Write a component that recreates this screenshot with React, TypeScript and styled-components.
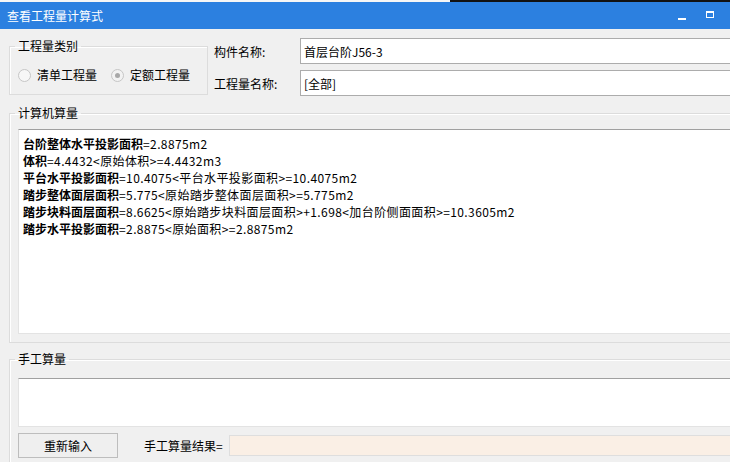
import styled, { createGlobalStyle } from 'styled-components'

const GlobalStyle = createGlobalStyle`
  html, body {
    margin: 0;
    padding: 0;
    overflow: hidden;
    background: #f0f0f0;
  }
  body {
    font-family: 'Microsoft YaHei', 'Noto Sans CJK SC', 'Noto Sans', sans-serif;
    font-size: 12px;
    color: #000;
  }
`

type Line = { label: string; value: string }

const calcLines: Line[] = [
  { label: '台阶整体水平投影面积', value: '=2.8875m2' },
  { label: '体积', value: '=4.4432<原始体积>=4.4432m3' },
  { label: '平台水平投影面积', value: '=10.4075<平台水平投影面积>=10.4075m2' },
  { label: '踏步整体面层面积', value: '=5.775<原始踏步整体面层面积>=5.775m2' },
  {
    label: '踏步块料面层面积',
    value: '=8.6625<原始踏步块料面层面积>+1.698<加台阶侧面面积>=10.3605m2',
  },
  { label: '踏步水平投影面积', value: '=2.8875<原始面积>=2.8875m2' },
]

export default function App() {
  return (
    <StyledWindow>
      <GlobalStyle />
      <TopStrip>
        <div className='left' />
        <div className='right' />
      </TopStrip>
      <TitleBar>
        <span>查看工程量计算式</span>
        <WindowControls>
          <MinButton />
          <MaxButton />
        </WindowControls>
      </TitleBar>
      <Body>
        <HeaderRow>
          <TypeGroup>
            <Legend>工程量类别</Legend>
            <RadioRow>
              <RadioItem>
                <Radio />
                清单工程量
              </RadioItem>
              <RadioItem>
                <Radio $checked />
                定额工程量
              </RadioItem>
            </RadioRow>
          </TypeGroup>
          <FieldGrid>
            <FieldLabel>构件名称:</FieldLabel>
            <TextBox>首层台阶J56-3</TextBox>
            <FieldLabel>工程量名称:</FieldLabel>
            <TextBox>[全部]</TextBox>
          </FieldGrid>
        </HeaderRow>

        <CalcGroup>
          <Legend>计算机算量</Legend>
          <CalcArea>
            {calcLines.map((line) => (
              <CalcLine key={line.label}>
                <b>{line.label}</b>
                <span>{line.value}</span>
              </CalcLine>
            ))}
          </CalcArea>
        </CalcGroup>

        <ManualGroup>
          <Legend>手工算量</Legend>
          <ManualArea />
          <ActionRow>
            <ResetButton>重新输入</ResetButton>
            <ResultLabel>手工算量结果=</ResultLabel>
            <ResultBox />
          </ActionRow>
        </ManualGroup>
      </Body>
    </StyledWindow>
  )
}

const StyledWindow = styled.div`
  width: 730px;
  height: 462px;
  overflow: hidden;
  background: #f0f0f0;
`

const TopStrip = styled.div`
  display: flex;
  height: 2px;

  .left {
    width: 450px;
    background: #f6f6f6;
  }
  .right {
    flex: 1;
    background: #121212;
  }
`

const TitleBar = styled.div`
  height: 27px;
  display: flex;
  align-items: center;
  justify-content: space-between;
  padding-left: 7px;
  background: #2c80e0;
  color: #fff;
  font-size: 12px;
`

const WindowControls = styled.div`
  display: flex;
  align-items: center;
  gap: 20px;
  padding-right: 16px;
`

const MinButton = styled.span`
  display: block;
  width: 8px;
  height: 2px;
  margin-top: 7px;
  background: #fff;
`

const MaxButton = styled.span`
  display: block;
  box-sizing: border-box;
  width: 8px;
  height: 7px;
  margin-top: -2px;
  border: 1px solid #fff;
  border-top-width: 2px;
`

const Body = styled.div`
  width: 760px;
  padding: 9px 0 0 9px;
  display: flex;
  flex-direction: column;
`

const HeaderRow = styled.div`
  display: flex;
  align-items: flex-start;
`

const Group = styled.fieldset`
  margin: 0;
  padding: 0 0 0 8px;
  border: 1px solid #dcdcdc;
  box-shadow: inset 1px 1px 0 #fff;
  min-width: 0;
`

const Legend = styled.legend`
  margin-left: -3px;
  padding: 0 3px;
  font-size: 12px;
  line-height: 14px;
`

const TypeGroup = styled(Group)`
  box-sizing: border-box;
  width: 199px;
  height: 56px;
  margin-top: 1px;
`

const RadioRow = styled.div`
  display: flex;
  gap: 14px;
  margin-top: 15px;
`

const RadioItem = styled.label`
  display: flex;
  align-items: center;
  gap: 6px;
  line-height: 14px;
`

const Radio = styled.span<{ $checked?: boolean }>`
  box-sizing: border-box;
  width: 13px;
  height: 13px;
  border-radius: 50%;
  border: 1px solid #c6c6c6;
  background: ${({ $checked }) => ($checked ? '#f2f2f2' : '#f7f7f7')};
  display: flex;
  align-items: center;
  justify-content: center;

  &::after {
    content: '';
    width: 5px;
    height: 5px;
    border-radius: 50%;
    background: ${({ $checked }) => ($checked ? '#a8a8a8' : 'transparent')};
  }
`

const FieldGrid = styled.div`
  flex: 1;
  display: grid;
  grid-template-columns: 86px 1fr;
  grid-auto-rows: 26px;
  row-gap: 6px;
  margin-left: 6px;
`

const FieldLabel = styled.div`
  display: flex;
  align-items: center;
`

const TextBox = styled.div`
  box-sizing: border-box;
  border: 1px solid #acacac;
  background: #fff;
  display: flex;
  align-items: center;
  padding-left: 3px;
`

const CalcGroup = styled(Group)`
  margin-top: 10px;
  padding-bottom: 8px;
`

const TextArea = styled.div`
  box-sizing: border-box;
  background: #fff;
  border: 1px solid #e3e3e3;
  border-top-color: #a0a0a0;
`

const CalcArea = styled(TextArea)`
  height: 205px;
  margin-top: 9px;
  padding: 5px 0 0 4px;
`

const CalcLine = styled.div`
  line-height: 17px;
  white-space: nowrap;

  b {
    font-weight: 700;
  }

  span {
    letter-spacing: 0.4px;
  }
`

const ManualGroup = styled(Group)`
  margin-top: 9px;
  padding-bottom: 20px;
`

const ManualArea = styled(TextArea)`
  height: 49px;
  margin-top: 12px;
`

const ActionRow = styled.div`
  display: flex;
  align-items: center;
  margin-top: 6px;
`

const ResetButton = styled.button`
  box-sizing: border-box;
  width: 100px;
  height: 25px;
  border: 1px solid #bdbdbd;
  background: #efefef;
  font: inherit;
  color: #000;
  padding: 0;
`

const ResultLabel = styled.span`
  margin-left: 26px;
`

const ResultBox = styled.div`
  flex: 1;
  box-sizing: border-box;
  height: 21px;
  margin-left: 6px;
  border: 1px solid #dedede;
  background: #faefe5;
`
